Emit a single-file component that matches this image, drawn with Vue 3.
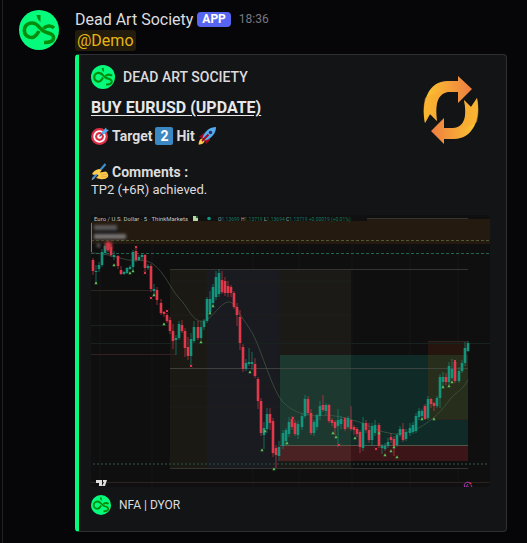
<script setup>
import { h } from 'vue'

// Brand mark shared by the avatar, the author line and the footer
const BrandLogo = () =>
  h('svg', { viewBox: '0 0 40 40', 'aria-hidden': 'true' }, [
    h('circle', { cx: 20, cy: 20, r: 20, fill: '#05fb7c' }),
    h('g', { fill: 'none', stroke: '#078d0c', 'stroke-width': 3.6 }, [
      h('path', { d: 'M20 21C17 27 13 28.500 10 27C4 25 4 17 9 14C14 11.500 18 14 21 18C25 23 29 22.500 32 24C37 27 35 33 25 32.500' }),
      h('path', { d: 'M35 18C32 15 27 15.500 24.500 18.500' })
    ]),
    h('path', { d: 'M17.5 5L21.5 5L21.5 12Q18.5 10 17.5 5Z', fill: '#078d0c' })
  ])

// x, high, body top, body bottom, low, rising
const candles = [
  [93, 258, 260, 271, 275, 0], [96, 265, 271, 272, 283, 1], [99, 262, 265, 269, 272, 1],
  [102, 249, 252, 265, 267, 1], [105, 244, 246, 253, 255, 1], [108, 241, 243, 250, 252, 0],
  [111, 244, 247, 255, 257, 0], [114, 251, 255, 257, 260, 1], [118, 255, 256, 266, 269, 0],
  [121, 266, 270, 274, 275, 0], [124, 271, 272, 274, 275, 1], [127, 267, 268, 273, 274, 1],
  [130, 265, 267, 269, 270, 1], [133, 250, 252, 267, 270, 1], [136, 246, 251, 260, 262, 0],
  [139, 255, 257, 260, 261, 1], [142, 253, 255, 257, 260, 1], [145, 254, 255, 268, 273, 0],
  [148, 264, 266, 268, 270, 1], [151, 264, 266, 289, 292, 0], [154, 284, 289, 291, 296, 1],
  [157, 287, 290, 300, 305, 0], [161, 299, 303, 313, 315, 0], [164, 311, 312, 314, 317, 0],
  [167, 313, 315, 321, 323, 0], [170, 317, 320, 331, 334, 0], [173, 324, 331, 341, 349, 0],
  [176, 335, 338, 340, 355, 1], [179, 321, 324, 338, 340, 1], [182, 320, 325, 331, 333, 0],
  [185, 328, 331, 348, 357, 0], [188, 337, 347, 356, 360, 0], [191, 333, 339, 356, 365, 1],
  [194, 321, 327, 341, 343, 1], [198, 321, 327, 338, 340, 0], [201, 321, 327, 338, 340, 1],
  [204, 319, 321, 327, 330, 1], [207, 297, 299, 321, 323, 1], [210, 291, 299, 312, 314, 1],
  [213, 284, 287, 303, 306, 1], [216, 271, 277, 297, 300, 1], [219, 269, 273, 294, 297, 1],
  [222, 271, 280, 292, 294, 0], [225, 277, 281, 293, 296, 0], [228, 281, 286, 293, 297, 0],
  [231, 285, 287, 293, 297, 0], [234, 291, 293, 307, 309, 0], [237, 303, 307, 315, 326, 0],
  [240, 310, 317, 343, 350, 0], [243, 344, 347, 369, 372, 0], [246, 359, 363, 369, 371, 1],
  [249, 348, 362, 364, 366, 1], [252, 352, 362, 364, 370, 1], [255, 358, 364, 376, 378, 0],
  [258, 377, 379, 401, 409, 0], [261, 398, 401, 433, 436, 0], [264, 422, 428, 435, 449, 1],
  [267, 408, 414, 429, 433, 1], [270, 408, 414, 423, 430, 0], [273, 418, 421, 453, 457, 0],
  [276, 445, 448, 455, 468, 0], [279, 441, 447, 456, 461, 1], [283, 430, 433, 446, 449, 1],
  [286, 428, 430, 441, 445, 1], [289, 417, 422, 434, 437, 1], [292, 416, 419, 427, 430, 0],
  [295, 420, 423, 434, 436, 0], [298, 421, 424, 435, 439, 1], [302, 413, 416, 427, 430, 1],
  [305, 395, 399, 416, 418, 1], [308, 396, 399, 413, 415, 0], [311, 409, 413, 433, 435, 0],
  [314, 420, 422, 433, 436, 1], [317, 414, 415, 427, 430, 1], [320, 401, 406, 416, 420, 1],
  [323, 395, 405, 410, 412, 0], [326, 403, 405, 411, 415, 1], [329, 404, 405, 421, 423, 0],
  [332, 418, 420, 423, 426, 0], [335, 420, 422, 428, 435, 0], [338, 409, 420, 426, 447, 1],
  [341, 416, 419, 424, 429, 1], [345, 417, 420, 429, 431, 0], [348, 416, 418, 427, 429, 1],
  [351, 406, 420, 429, 431, 0], [354, 425, 427, 430, 435, 0], [357, 427, 429, 434, 437, 0],
  [360, 430, 432, 447, 453, 0], [363, 417, 423, 448, 451, 1], [366, 420, 423, 430, 433, 0],
  [369, 423, 430, 440, 443, 0], [372, 423, 426, 440, 446, 1], [375, 420, 425, 433, 436, 1],
  [379, 423, 425, 446, 448, 0], [382, 444, 446, 448, 454, 1], [385, 443, 446, 449, 451, 1],
  [388, 438, 442, 446, 448, 1], [391, 433, 437, 440, 443, 0], [394, 436, 439, 446, 456, 0],
  [397, 433, 435, 445, 447, 1], [400, 426, 429, 435, 437, 1], [403, 423, 429, 440, 442, 0],
  [406, 429, 432, 439, 441, 1], [410, 423, 428, 433, 436, 1], [413, 422, 425, 432, 434, 1],
  [416, 413, 416, 431, 433, 1], [419, 408, 411, 417, 420, 1], [422, 409, 411, 416, 420, 1],
  [425, 404, 406, 419, 420, 0], [428, 396, 399, 418, 420, 1], [431, 398, 399, 404, 408, 0],
  [434, 402, 403, 406, 411, 0], [437, 396, 398, 406, 408, 1], [440, 374, 377, 398, 408, 1],
  [443, 372, 377, 382, 388, 1], [446, 373, 377, 382, 385, 0], [449, 362, 366, 382, 385, 1],
  [452, 359, 369, 378, 380, 1], [455, 360, 362, 381, 383, 0], [459, 367, 371, 381, 383, 1],
  [462, 360, 363, 371, 373, 1], [465, 342, 348, 363, 366, 1], [468, 341, 343, 351, 352, 1]
]

const buyMarks = [
  [96, 283], [114, 265], [130, 273], [133, 271], [154, 295], [164, 324], [201, 342], [210, 313],
  [213, 306], [250, 372], [262, 450], [265, 431], [274, 469], [287, 443], [333, 433], [336, 437],
  [355, 438], [379, 433], [385, 455], [391, 451], [394, 447], [397, 457], [422, 419], [434, 419],
  [443, 387], [449, 386], [452, 382]
]
const sellMarks = [
  [136, 247], [145, 273], [151, 298], [167, 311], [191, 366], [237, 312], [293, 418], [323, 407],
  [339, 445], [345, 419], [376, 449], [425, 407], [455, 361]
]
</script>

<template>
  <main class="page">
    <article class="message">
      <BrandLogo class="avatar" />
      <div class="body">
        <header class="head">
          <span class="name">Dead Art Society</span>
          <span class="tag">APP</span>
          <time class="time">18:36</time>
        </header>
        <div><span class="mention">@Demo</span></div>

        <section class="embed">
          <div class="top">
            <div class="copy">
              <div class="author"><BrandLogo class="author-icon" /><span>DEAD ART SOCIETY</span></div>
              <h2 class="title">BUY EURUSD (UPDATE)</h2>
              <p class="line strong">
                <svg class="emoji" viewBox="0 0 18 18" aria-hidden="true">
                  <circle cx="8.5" cy="9.5" r="8.5" fill="#dd2e44" />
                  <circle cx="8.5" cy="9.5" r="6.2" fill="#fff" />
                  <circle cx="8.5" cy="9.5" r="4.4" fill="#dd2e44" />
                  <circle cx="8.5" cy="9.5" r="2.3" fill="#fff" />
                  <path d="M8.5 9.5L14 4" stroke="#3b5f85" stroke-width="1.2" />
                  <path d="M11 5L15 0.5L15.6 2.5L18 3L13.5 7L11.2 7Z" fill="#55acee" />
                </svg>
                <span>Target</span>
                <span class="keycap">2</span>
                <span>Hit</span>
                <svg class="emoji" viewBox="0 0 18 18" aria-hidden="true">
                  <path d="M1 10L5 6.5L10 6L6 12Z M8 17L12 13L12 8L6 12Z" fill="#a0041e" />
                  <path d="M18 0C12 0 7 4 4.5 10.5L7.5 13.5C14 11 18 6 18 0Z" fill="#55acee" />
                  <path d="M0.5 17.5C1 13 2.5 11 4.5 11.5L6.5 13.5C6.5 16 4 17.5 0.5 17.5Z" fill="#ffcc4d" />
                  <path d="M4 14L10.5 7.5" stroke="#a0041e" stroke-width="1.8" />
                  <circle cx="12.5" cy="5.5" r="1.8" fill="#292f6b" />
                </svg>
              </p>
              <p class="line strong comments">
                <svg class="emoji" viewBox="0 0 18 18" aria-hidden="true">
                  <path d="M2.5 15L14.5 1" stroke="#3f8fd0" stroke-width="2.1" />
                  <path d="M0.5 17.5L1.7 14L3.5 15.5Z" fill="#99aab5" />
                  <path d="M1 11Q3 7 8 6L10.5 7L9 9.5L15 8.5Q18 11 17 14Q14 17 9 16L5 15L7.5 12.5L6 11L3 12Z" fill="#ffcb4c" />
                  <path d="M10 12L16.5 11M10 14L16 13.5" stroke="#d99e38" stroke-width="0.7" />
                </svg>
                <span>Comments :</span>
              </p>
              <p class="line note">TP2 (+6R) achieved.</p>
            </div>

            <svg class="thumb" viewBox="0 0 80 80" role="img" aria-label="Update">
              <defs>
                <linearGradient id="arrow-a" x1="0" y1="0" x2="1" y2="0">
                  <stop offset="0" stop-color="#fbc62f" /><stop offset="1" stop-color="#ef7d42" />
                </linearGradient>
                <linearGradient id="arrow-b" x1="1" y1="0" x2="0" y2="0">
                  <stop offset="0" stop-color="#fbc62f" /><stop offset="1" stop-color="#ef7d42" />
                </linearGradient>
              </defs>
              <g>
                <path d="M15 53C11 32 18 11 38 11L48 11L48 6L62 19L48 33L48 22L38 22C27 24 25 35 27 51L20 44Z" fill="url(#arrow-a)" />
                <path d="M15 28C21 24 26 22 32 23C27 28 25 36 27 51L20 44L15 53Q12 40 15 28Z" fill="#f8a832" opacity="0.55" />
              </g>
              <g>
                <path d="M67 28C71 49 63 69 44 69L34 69L34 74L21 61L34 48L34 58L43 58C55 57 57 46 54 30L61 37Z" fill="url(#arrow-b)" />
                <path d="M67 52C61 56 56 58 49 58C54 55 56 48 56 40L54 30L61 37L67 28Q70 40 67 52Z" fill="#f8a832" opacity="0.55" />
              </g>
            </svg>
          </div>

          <svg class="chart" viewBox="91 215 399 272" role="img" aria-label="Euro / U.S. Dollar chart">
            <rect x="91" y="215" width="399" height="272" fill="#0f0f0f" />
            <g stroke="#171716">
              <path d="M100 220V487M152 220V487M253 220V487M299 220V487M352 220V487M410 220V487M458 220V487" />
            </g>
            <rect x="91" y="219" width="399" height="25" fill="#241a10" />
            <rect x="170" y="269" width="37" height="200" fill="#1a1914" />
            <rect x="207" y="269" width="72" height="200" fill="#1a1b20" />
            <rect x="279" y="269" width="72" height="200" fill="#1b1a17" />
            <rect x="280" y="355" width="188" height="91" fill="#102b27" />
            <rect x="280" y="355" width="71" height="91" fill="#1d382f" />
            <rect x="280" y="446" width="188" height="15" fill="#3c1519" />
            <rect x="280" y="446" width="71" height="15" fill="#4a2224" />
            <rect x="428" y="341" width="40" height="14" fill="#26150f" />
            <rect x="428" y="355" width="40" height="64" fill="#272e1b" />
            <path d="M170 281H351M170 315H351M170 386H280M170 407H280" stroke="#1f1f1d" />
            <path d="M91 290.5H153M91 482.5H490M428 341.5H468M428 419.5H468" stroke="#2b2420" />
            <path d="M91 325.5H170M91 343.5H490" stroke="#18221f" />
            <path d="M91 354.5H176" stroke="#34201f" />
            <path d="M367 218.5H468M170 269.5H468M170 468.5H468" stroke="#343431" />
            <path d="M170 368.5H468" stroke="#4a4c48" opacity="0.75" />
            <path d="M280 445.5H468" stroke="#60624f" opacity="0.8" />
            <path d="M91 240.5H489" stroke="#4c5b31" stroke-dasharray="3 2" />
            <path d="M91 253.5H489" stroke="#1d6654" stroke-dasharray="3 2" />
            <path d="M93 464H489" stroke="#244038" stroke-width="1.5" stroke-dasharray="2 2" />
            <path class="average" d="M91 253C104 253 115 257 128 260C139 261 146 259 153 264C165 273 170 288 179 298C188 307 190 317 199 321C208 322 211 316 219 308C225 302 230 299 235 306C242 319 251 328 257 343C267 368 273 389 282 401C292 412 303 415 317 416C332 414 341 417 352 420C367 423 374 431 389 433C401 436 406 432 417 429C435 419 442 410 451 398C459 390 463 389 468 380" />
            <g v-for="c in candles" :key="c[0]" :fill="c[5] ? '#13947d' : '#e1384b'">
              <rect :x="c[0] - 0.5" :y="c[1]" width="1" :height="c[4] - c[1]" opacity="0.65" />
              <rect :x="c[0] - 1.3" :y="c[2]" width="2.6" :height="c[3] - c[2]" />
            </g>
            <path v-for="m in buyMarks" :key="'b' + m" :d="`M${m[0] - 1.6} ${m[1] + 1.3}h3.2l-1.6 -3z`" fill="#5bbf55" />
            <path v-for="m in sellMarks" :key="'s' + m" :d="`M${m[0] - 1.2} ${m[1] - 1.2}l2.4 2.4m0 -2.4l-2.4 2.4`" stroke="#dd354d" />
            <g class="blurred">
              <rect x="92" y="225" width="26" height="15" fill="#181718" />
              <rect x="94" y="225" width="23" height="5" fill="#5c5a59" />
              <rect x="94" y="234" width="32" height="5" fill="#777472" />
              <rect x="105" y="242" width="7" height="8" fill="#c93946" />
              <rect x="97" y="244" width="3" height="3" fill="#777" />
            </g>
            <path d="M91.5 223V252" stroke="#777" />
            <rect x="91" y="215" width="276" height="6" fill="#101010" />
            <text x="94" y="221" class="symbol">Euro / U.S. Dollar · 5 · ThinkMarkets</text>
            <rect x="193" y="216" width="5" height="5" fill="#b8d79d" /><path d="M196 216h2v2h-2z" fill="#1d5b38" />
            <circle cx="209" cy="218.5" r="1.8" fill="#089981" />
            <text x="218" y="221" class="quote"><tspan class="key">O</tspan>1.13699 <tspan class="key">H</tspan>1.13719 <tspan class="key">L</tspan>1.13694 <tspan class="key">C</tspan>1.13719 +0.00019 (+0.01%)</text>
            <path d="M96 480h6v6h-3v-3h-3zM103 480h4l-2 6h-3l2 -4h-1z" fill="#ddd" />
            <g fill="none" stroke="#a13aae"><path d="M464.5 487a3.5 3.5 0 0 1 5.5 -4M471 485l1 2" /><path d="M468 484l-2 3h3" /></g>
            <circle cx="470.5" cy="483.5" r="1" fill="#e1384b" />
          </svg>

          <footer class="foot"><BrandLogo class="foot-icon" /><span>NFA | DYOR</span></footer>
        </section>
      </div>
    </article>
  </main>
</template>

<style>
body { margin: 0; background: #060608; }
</style>

<style scoped>
.page {
  box-sizing: border-box;
  min-height: 100vh;
  margin-left: 2px;
  padding: 9px 20px 11px 16px;
  border-left: 1px solid #202024;
  color: #dcdcdf;
  font-family: Roboto, "Noto Sans", sans-serif;
}
.message { display: flex; align-items: flex-start; gap: 16px; }
.avatar { flex: none; width: 40px; height: 40px; margin-top: 1px; }
.body { flex: 1; min-width: 0; }
.head { display: flex; align-items: center; height: 20px; }
.name { font-size: 16px; font-weight: 400; }
.tag {
  margin-left: 4px;
  padding: 0 5px;
  border-radius: 4px;
  background: #5865f2;
  color: #fff;
  font-size: 12px;
  font-weight: 700;
  line-height: 15px;
}
.time { margin-left: 8px; color: #77777f; font-size: 12px; }
.mention {
  display: inline-block;
  margin-top: 1px;
  padding: 0 2px;
  border-radius: 3px;
  background: #231b0b;
  color: #e5b613;
  font-size: 16px;
  font-weight: 400;
  line-height: 21px;
  vertical-align: top;
}
.embed {
  margin-top: 3px;
  padding: 10px 16px 16px 12px;
  border: 1px solid #2e2f32;
  border-left: 4px solid #05fb7c;
  border-radius: 4px;
  background: #131416;
}
.top { display: flex; justify-content: space-between; gap: 16px; }
.author { display: flex; align-items: center; gap: 8px; font-size: 14px; font-weight: 500; }
.author-icon { width: 24px; height: 24px; }
.title {
  margin: 8px 0;
  color: #e8e8ea;
  font-size: 16px;
  font-weight: 700;
  line-height: 22px;
  text-decoration: underline;
  text-underline-offset: 2px;
}
.line { display: flex; align-items: center; gap: 3px; margin: 0; font-size: 14px; line-height: 18px; }
.note { font-size: 13px; }
.strong { font-weight: 700; }
.comments { margin-top: 18px; }
.emoji { width: 18px; height: 18px; }
.keycap {
  width: 18px;
  border-radius: 2px;
  background: #3b88c3;
  color: #fff;
  text-align: center;
}
.thumb { flex: none; width: 80px; height: 80px; margin-top: 5px; }
.chart { display: block; width: 100%; margin-top: 16px; border-radius: 4px; }
.average { fill: none; stroke: #49614a; stroke-width: 0.8; opacity: 0.8; }
.symbol { fill: #c4c4c4; font-size: 6px; }
.quote { fill: #147762; font-size: 5px; }
.key { fill: #aaa; }
.blurred { filter: blur(1.5px); }
.foot { display: flex; align-items: center; gap: 8px; margin-top: 8px; font-size: 12px; font-weight: 400; }
.foot-icon { width: 20px; height: 20px; }
</style>
